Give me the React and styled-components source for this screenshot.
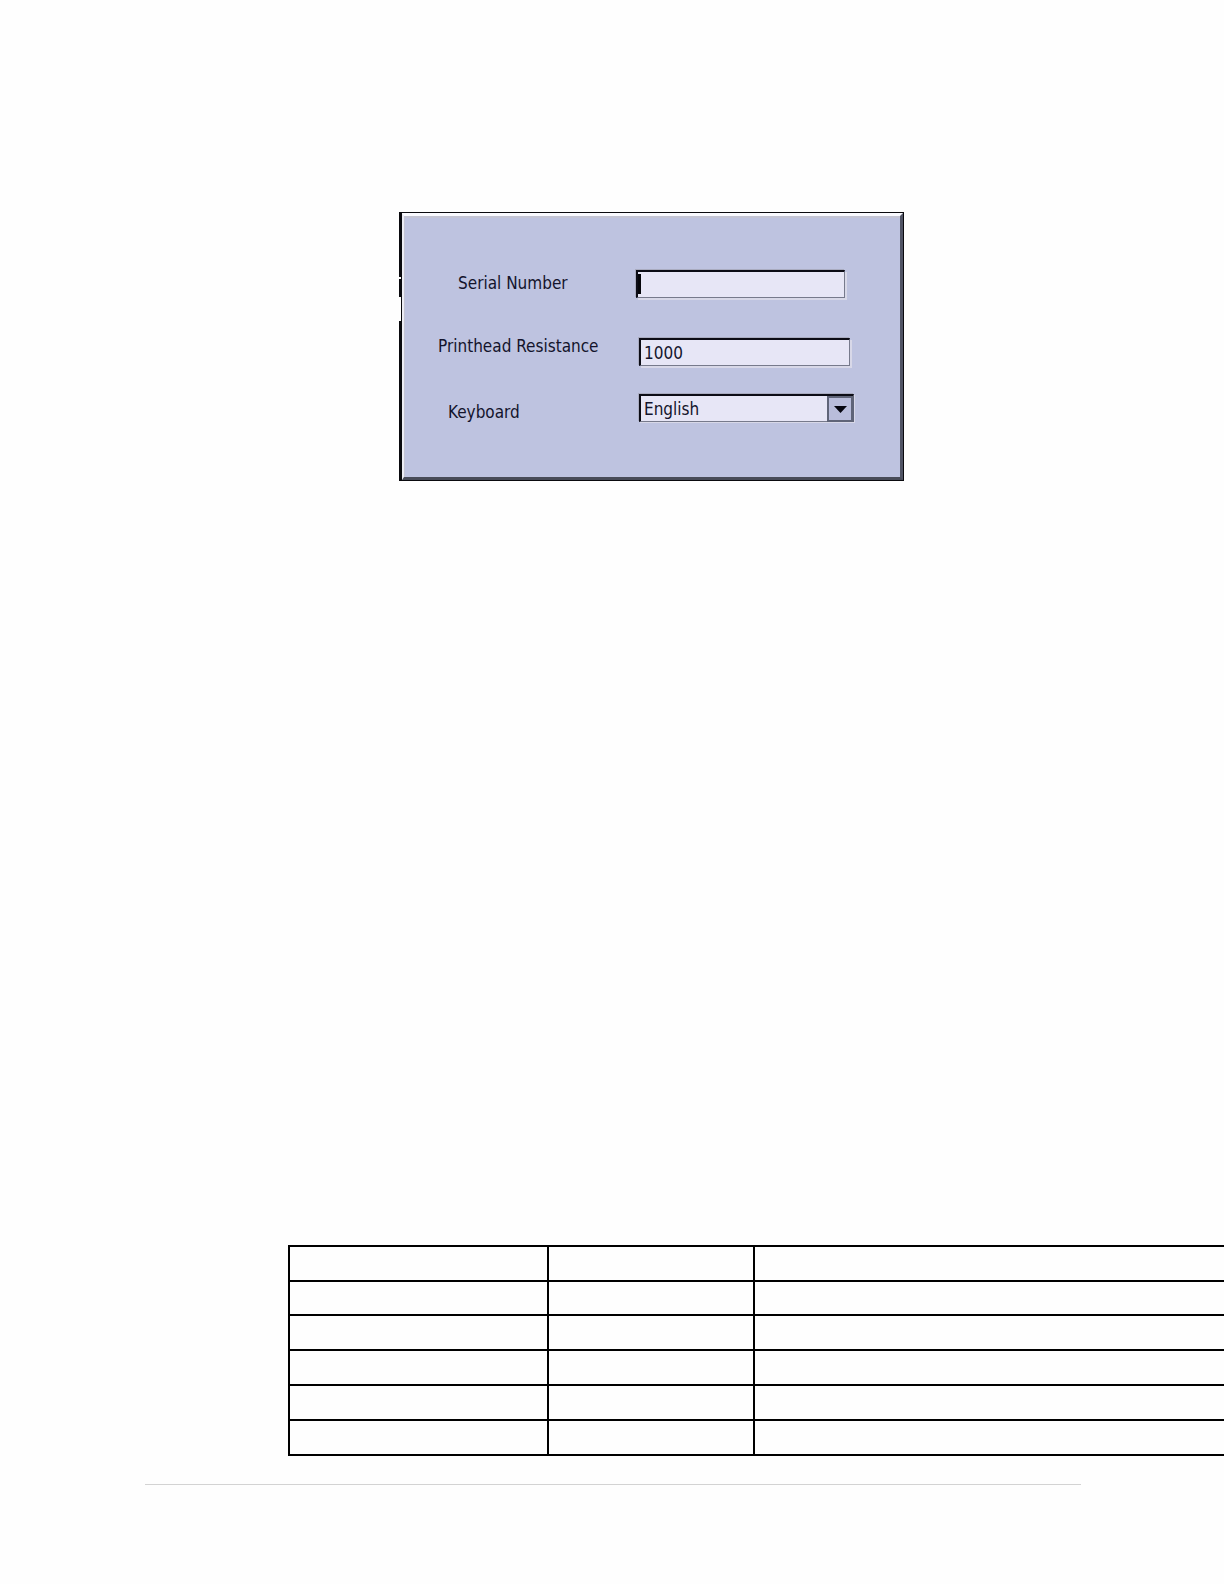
import styled, { createGlobalStyle } from "styled-components"

const ROWS = ["r1", "r2", "r3", "r4", "r5", "r6"]

const App = () => (
  <>
    <GlobalStyle />
    <Page>
      <Frame>
        <Dialog>
          <Labels>
            <Label htmlFor="serial" indent={2}>
              Serial Number
            </Label>
            <Label htmlFor="resistance">Printhead Resistance</Label>
            <Label htmlFor="keyboard" indent={1}>
              Keyboard
            </Label>
          </Labels>
          <Fields>
            <TextBox id="serial" type="text" width={209} caret />
            <TextBox
              id="resistance"
              type="text"
              width={211}
              inset
              defaultValue="1000"
            />
            <Combo>
              <Select id="keyboard" defaultValue="English">
                <option>English</option>
              </Select>
              <Arrow>
                <svg width="13" height="7" viewBox="0 0 13 7">
                  <path d="M0 0H13L6.5 7Z" fill="#05050f" />
                </svg>
              </Arrow>
            </Combo>
          </Fields>
        </Dialog>
      </Frame>

      <Grid>
        <colgroup>
          <col width="259" />
          <col width="206" />
          <col />
        </colgroup>
        <tbody>
          {ROWS.map(id => (
            <tr key={id}>
              <td />
              <td />
              <td />
            </tr>
          ))}
        </tbody>
      </Grid>
      <Rule />
    </Page>
  </>
)

export default App

/* - - - Page - - - */

const GlobalStyle = createGlobalStyle`
  * {
    box-sizing: border-box;
  }
  body {
    margin: 0;
    background: #fefefe;
  }
`

const Page = styled.main`
  padding: 212px 0 99px;
  overflow: hidden;
  font-family: "DejaVu Sans Condensed", "Noto Sans", Tahoma, sans-serif;
  font-size: 17px;
  color: #14142c;
`

/* - - - Dialog - - - */

/* the left strip of the frame is broken in two places */
const Frame = styled.div`
  max-width: 505px;
  margin-left: 399px;
  padding: 1px 1px 1px 3px;
  background: linear-gradient(
        #0a0a0e 65px,
        #fefefe 65px,
        #fefefe 67px,
        #0a0a0e 67px,
        #0a0a0e 85px,
        #fefefe 85px,
        #fefefe 109px,
        #0a0a0e 109px
      )
      left / 2px 100% no-repeat,
    #0a0a0e;
`

const Dialog = styled.form`
  display: flex;
  min-height: 267px;
  padding: 0 0 0 34px;
  background: #bec3e0;
  border-style: solid;
  border-width: 3px 3px 3px 2px;
  border-color: #fafaff #505465 #484b58 #ececf4;
  box-shadow: inset 1px 2px 0 #c3c4d4;
`

const Labels = styled.div`
  display: grid;
  grid-template-rows: 63px 66px 24px;
  align-content: start;
  width: 198px;
  padding-top: 55px;
`

const Label = styled.label.withConfig({
  shouldForwardProp: prop => prop !== "indent"
})`
  padding-left: ${p => (p.indent || 0) * 10}px;
  line-height: 24px;
  white-space: nowrap;
`

const Fields = styled.div`
  display: grid;
  grid-template-rows: 68px 56px 28px;
  align-content: start;
  padding-top: 54px;
`

const TextBox = styled.input.withConfig({
  shouldForwardProp: prop => !["width", "caret", "inset"].includes(prop)
})`
  width: ${p => p.width}px;
  height: 28px;
  margin: 0 0 0 ${p => (p.inset ? "3px" : "0")};
  padding: 0 3px;
  border-style: solid;
  border-width: 2px 1px 1px 2px;
  border-color: #0c0c16 #777a8c #777a8c #0c0c16;
  border-radius: 0;
  outline: none;
  background: ${p =>
    p.caret
      ? "linear-gradient(#05050a, #05050a) 0 2px / 3px 20px no-repeat, #e7e6f6"
      : "#e7e6f6"};
  box-shadow: 2px 2px 0 #d8d8e8, -1px -1px 0 #a9abbf;
  font: inherit;
  color: inherit;
`

const Combo = styled.div`
  position: relative;
  width: 215px;
  height: 28px;
  margin-left: 3px;
  box-shadow: 1px 1px 0 #d8d8e8, -1px -1px 0 #a9abbf;
`

const Select = styled.select`
  appearance: none;
  width: 100%;
  height: 28px;
  padding: 0 28px 0 3px;
  border-style: solid;
  border-width: 2px 1px 1px 2px;
  border-color: #0c0c16 #777a8c #777a8c #0c0c16;
  border-radius: 0;
  outline: none;
  background: #e7e6f6;
  font: inherit;
  color: inherit;
`

const Arrow = styled.span`
  position: absolute;
  top: 2px;
  right: 0;
  bottom: 0;
  display: flex;
  align-items: center;
  justify-content: center;
  width: 27px;
  background: #b9bddb;
  border: solid #5f6478;
  border-width: 2px 3px 2px 2px;
  pointer-events: none;
`

/* - - - Table and footer rule - - - */

const Grid = styled.table`
  width: calc(100% - 288px);
  margin: 764px 0 0 288px;
  table-layout: fixed;
  border-collapse: collapse;

  td {
    height: 35px;
    padding: 0;
    border: 2px solid #000;
  }
  tr:nth-child(2) td {
    height: 34px;
  }
  td:last-child {
    border-right: none;
  }
`

const Rule = styled.hr`
  height: 1px;
  margin: 28px 143px 0 145px;
  border: none;
  background: #d3d3d3;
`
